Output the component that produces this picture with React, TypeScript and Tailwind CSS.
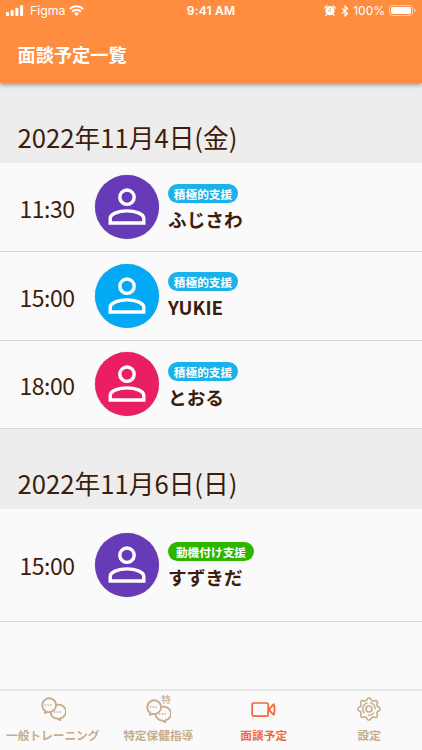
import type { ReactNode } from "react";

type Meeting = {
  time: string;
  name: string;
  badge: string;
  badgeClass: string;
  avatarClass: string;
  rowClass: string;
  infoClass: string;
};

const firstDay: Meeting[] = [
  {
    time: "11:30",
    name: "ふじさわ",
    badge: "積極的支援",
    badgeClass: "bg-[#1ab2ea] w-[70px]",
    avatarClass: "bg-[#673ab7]",
    rowClass: "h-[89px]",
    infoClass: "pt-[21px]",
  },
  {
    time: "15:00",
    name: "YUKIE",
    badge: "積極的支援",
    badgeClass: "bg-[#1ab2ea] w-[70px]",
    avatarClass: "bg-[#03a9f4]",
    rowClass: "h-[89px]",
    infoClass: "pt-5",
  },
  {
    time: "18:00",
    name: "とおる",
    badge: "積極的支援",
    badgeClass: "bg-[#1ab2ea] w-[70px]",
    avatarClass: "bg-[#e91e63]",
    rowClass: "h-[88px] pb-px",
    infoClass: "pt-[21px]",
  },
];

const secondDay: Meeting[] = [
  {
    time: "15:00",
    name: "すずきだ",
    badge: "動機付け支援",
    badgeClass: "bg-[#2db500] w-[86px]",
    avatarClass: "bg-[#673ab7]",
    rowClass: "h-[113px] pb-px",
    infoClass: "pt-[33px]",
  },
];

// outline of a gear with eight rounded teeth
const gearPath =
  Array.from({ length: 96 }, (_, i) => {
    const angle = (i / 96) * Math.PI * 2;
    const radius = 9.9 + 1.15 * Math.tanh(1.8 * Math.cos(angle * 8));
    const x = 12 + radius * Math.cos(angle);
    const y = 12 + radius * Math.sin(angle);
    return `${i === 0 ? "M" : "L"}${x.toFixed(2)} ${y.toFixed(2)}`;
  }).join("") + "z";

function StatusBar() {
  return (
    <div className="grid h-[21px] grid-cols-3 items-center pl-[6px] pr-[6px] font-['Inter',sans-serif] text-[12.5px] text-white">
      <div className="flex items-center">
        <svg width="18" height="11" viewBox="0 0 18 11" fill="currentColor">
          <rect x="0" y="7" width="3" height="4" rx="0.8" />
          <rect x="4.7" y="5" width="3" height="6" rx="0.8" />
          <rect x="9.4" y="2.7" width="3" height="8.3" rx="0.8" />
          <rect x="14.1" y="0.2" width="3" height="10.8" rx="0.8" />
        </svg>
        <span className="ml-[6px] pt-px text-[12.3px]">Figma</span>
        <svg className="ml-1" width="15" height="11" viewBox="0 0 15 11" fill="none" stroke="currentColor" strokeWidth="2">
          <path d="M0.8 4a9.5 9.5 0 0 1 13.4 0" />
          <path d="M3.1 6.6a6.2 6.2 0 0 1 8.8 0" />
          <path d="M7.5 11L5 8.4a3.6 3.6 0 0 1 5 0z" fill="currentColor" stroke="none" />
        </svg>
      </div>
      <div className="text-center text-xs font-semibold tracking-[0.2px]">9:41 AM</div>
      <div className="flex items-center justify-end">
        <svg width="12" height="11" viewBox="0 0 12 11">
          <circle cx="6" cy="5.7" r="4.6" fill="#fff" />
          <path d="M0.8 3L3 0.9M11.2 3L9 0.9M2.8 9.2L1.9 10.4M9.2 9.2l.9 1.2" stroke="#fff" strokeWidth="1.3" strokeLinecap="round" />
          <path d="M6.2 3v3H4" fill="none" stroke="#ff8d3f" strokeWidth="0.7" />
        </svg>
        <svg className="ml-[5px]" width="8" height="12" viewBox="0 0 8 12" fill="none" stroke="currentColor" strokeWidth="1.1">
          <path d="M1 3.3l5.6 5.2L4 11V1l2.6 2.5L1 8.7" />
        </svg>
        <span className="ml-1 text-[12px]">100%</span>
        <svg className="ml-1" width="27" height="11" viewBox="0 0 27 11">
          <rect x="0.5" y="0.5" width="23" height="10" rx="2.6" fill="none" stroke="#fff" strokeOpacity="0.55" />
          <rect x="2" y="2" width="20" height="7" rx="1.4" fill="#fff" />
          <path d="M25 3.6q1.6.6 1.6 1.9T25 7.4z" fill="#fff" fillOpacity="0.55" />
        </svg>
      </div>
    </div>
  );
}

function Avatar({ className }: { className: string }) {
  return (
    <div className={`ml-[18px] flex size-16 shrink-0 items-center justify-center rounded-full shadow-[0_0_1px_rgba(0,0,0,0.4)] ${className}`}>
      <svg width="38" height="38" viewBox="0 0 38 38" fill="none" stroke="#fff" strokeWidth="3.4">
        <circle cx="19" cy="9.2" r="7.2" />
        <path d="M2.2 35V30.5C2.2 25.8 11 22.9 19 22.9S35.8 25.8 35.8 30.5V35z" />
      </svg>
    </div>
  );
}

function MeetingRow({ meeting }: { meeting: Meeting }) {
  return (
    <div className={`flex items-center border-b border-[#d9d9d9] ${meeting.rowClass}`}>
      <div className="w-[77px] pl-[19.5px] pt-px text-[23px] leading-8 tracking-[-0.5px]">{meeting.time}</div>
      <Avatar className={meeting.avatarClass} />
      <div className={`ml-[9px] self-start ${meeting.infoClass}`}>
        <div
          className={`flex h-[19px] items-center justify-center rounded-full text-[11.7px] font-bold leading-none text-white ${meeting.badgeClass}`}
        >
          {meeting.badge}
        </div>
        <div className="mt-[3px] text-[18.7px] font-bold leading-[26px]">{meeting.name}</div>
      </div>
    </div>
  );
}

function DayHeader({ children }: { children: ReactNode }) {
  return (
    <div className="h-20 bg-[#ededed] pl-[17.5px] pt-[35px] text-[25.7px] leading-[38px]">
      {children}
    </div>
  );
}

function ChatIcon() {
  return (
    <svg width="26" height="24" viewBox="0 0 26 24" fill="none" stroke="currentColor" strokeWidth="1.8" strokeLinejoin="round">
      <path d="M5.3 13.9L4.8 16l2.8-1.1A6.9 6.9 0 1 0 5.3 13.9z" />
      <path d="M15.6 8.500a6.900 6.900 0 1 1 4.600 12.800l.2 1.800-2.900-1.500a6.900 6.900 0 0 1-7-6.500" />
      <path d="M4.800 8h1.400M7.500 8h1.400M10.200 8h1.400M14 15h1.400M16.700 15h1.400M19.400 15h1.400" strokeWidth="1.3" />
    </svg>
  );
}

function VideoIcon() {
  return (
    <svg width="25" height="24" viewBox="0 0 25 24" fill="none" stroke="currentColor" strokeWidth="1.7" strokeLinejoin="round">
      <rect x="1.2" y="6" width="16" height="13.2" rx="1.5" />
      <path d="M17.8 12.6Q20 10 22.8 7.2q.8 2.600.8 5.400t-.8 5.400Q20 15.200 17.800 12.600z" />
    </svg>
  );
}

function GearIcon() {
  return (
    <svg width="24" height="24" viewBox="0 0 24 24" fill="none" stroke="currentColor" strokeWidth="1.6" strokeLinejoin="round">
      <path d={gearPath} />
      <circle cx="12" cy="12" r="3" />
      <path d="M10.5 5.900A6.300 6.300 0 0 0 7.500 16.400M12.800 5.700a6.300 6.300 0 0 1 5.500 6.800M10.800 18.200a6.300 6.300 0 0 0 6.300-2.600" strokeWidth="1.3" />
    </svg>
  );
}

function Tab({ icon, label, active = false }: { icon: ReactNode; label: string; active?: boolean }) {
  return (
    <div className={`flex flex-col items-center pt-[6px] ${active ? "text-[#ef6738]" : "text-[#c5ad8d]"}`}>
      <div className="flex h-6">{icon}</div>
      <div className="mt-[5px] whitespace-nowrap text-[11.7px] font-bold leading-[18px]">{label}</div>
    </div>
  );
}

export default function App() {
  return (
    <div className="flex h-[750px] w-[422px] flex-col overflow-hidden bg-[#fafafa] font-['Noto_Sans_CJK_JP',sans-serif] text-[#3e1d0a]">
      {/* header */}
      <div className="z-10 h-[83px] shrink-0 bg-[#ff8d3f] shadow-[0_2px_4px_rgba(0,0,0,0.35)]">
        <StatusBar />
        <div className="pl-[17.5px] pt-[19px] text-[18.2px] font-bold leading-7 text-white">面談予定一覧</div>
      </div>

      {/* schedule */}
      <div className="min-h-0 flex-1 overflow-hidden">
        <DayHeader>2022年11月4日(金)</DayHeader>
        {firstDay.map((meeting) => (
          <MeetingRow key={meeting.time} meeting={meeting} />
        ))}
        <DayHeader>2022年11月6日(日)</DayHeader>
        {secondDay.map((meeting) => (
          <MeetingRow key={meeting.time} meeting={meeting} />
        ))}
      </div>

      {/* tab bar */}
      <div className="grid h-[61px] shrink-0 grid-cols-4 border-t-2 border-[#e6e6e6] bg-[#fafafa]">
        <Tab icon={<ChatIcon />} label="一般トレーニング" />
        <Tab
          icon={
            <div className="relative">
              <div className="pt-[2px]">
                <ChatIcon />
              </div>
              <span className="absolute left-4 -top-[2px] text-[9.5px] font-medium leading-[9px]">特</span>
            </div>
          }
          label="特定保健指導"
        />
        <Tab icon={<VideoIcon />} label="面談予定" active />
        <Tab icon={<GearIcon />} label="設定" />
      </div>
    </div>
  );
}
